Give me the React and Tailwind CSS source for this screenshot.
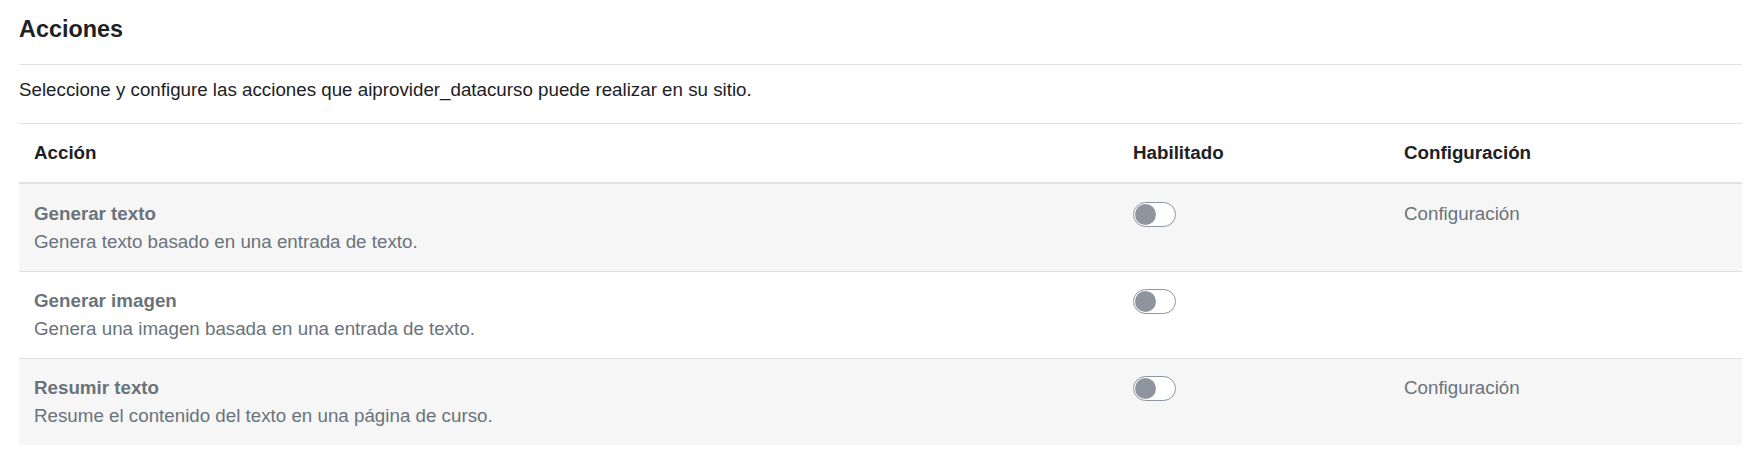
import React from "react";

const rows = [
  {
    title: "Generar texto",
    desc: "Genera texto basado en una entrada de texto.",
    config: true,
    striped: true,
  },
  {
    title: "Generar imagen",
    desc: "Genera una imagen basada en una entrada de texto.",
    config: false,
    striped: false,
  },
  {
    title: "Resumir texto",
    desc: "Resume el contenido del texto en una página de curso.",
    config: true,
    striped: true,
  },
];

function Toggle() {
  return (
    <div className="mt-[2px] w-[43px] h-[25px] rounded-full border border-[#8f959e] bg-white flex items-center pl-[1px]">
      <div className="w-[21px] h-[21px] rounded-full bg-[#8f959e]" />
    </div>
  );
}

export default function App() {
  return (
    <div
      className="w-[1746px] min-h-[467px] bg-white pl-[19px] pr-[4px] text-[18.75px] leading-[28.125px] text-[#1d2125]"
      style={{ fontFamily: "'Liberation Sans', Arial, sans-serif" }}
    >
      <h3 className="pt-[15px] pb-[21px] text-[23.4px] leading-[28px] font-bold border-b border-[#dee2e6]">
        Acciones
      </h3>
      <p className="mt-[10.5px] mb-[19.5px]">
        Seleccione y configure las acciones que aiprovider_datacurso puede realizar en su sitio.
      </p>
      <table className="w-full table-fixed border-collapse">
        <colgroup>
          <col className="w-[1099px]" />
          <col className="w-[271px]" />
          <col />
        </colgroup>
        <thead>
          <tr>
            <th className="text-left font-bold p-[15px] border-t border-[#dee2e6] border-b-2 border-b-[#dee2e6]">
              Acción
            </th>
            <th className="text-left font-bold p-[15px] border-t border-[#dee2e6] border-b-2 border-b-[#dee2e6]">
              Habilitado
            </th>
            <th className="text-left font-bold p-[15px] border-t border-[#dee2e6] border-b-2 border-b-[#dee2e6]">
              Configuración
            </th>
          </tr>
        </thead>
        <tbody className="text-[#6a737b]">
          {rows.map((r, i) => (
            <tr
              key={r.title}
              className={`${r.striped ? "bg-[#f6f6f6]" : "bg-white"} ${
                i < rows.length - 1 ? "border-b border-[#dee2e6]" : ""
              }`}
            >
              <td className="pt-[15.5px] pb-[14.5px] px-[15px] align-top">
                <div className="font-bold">{r.title}</div>
                <div>{r.desc}</div>
              </td>
              <td className="pt-[15.5px] pb-[14.5px] px-[15px] align-top">
                <Toggle />
              </td>
              <td className="pt-[15.5px] pb-[14.5px] px-[15px] align-top">
                {r.config ? "Configuración" : ""}
              </td>
            </tr>
          ))}
        </tbody>
      </table>
    </div>
  );
}
